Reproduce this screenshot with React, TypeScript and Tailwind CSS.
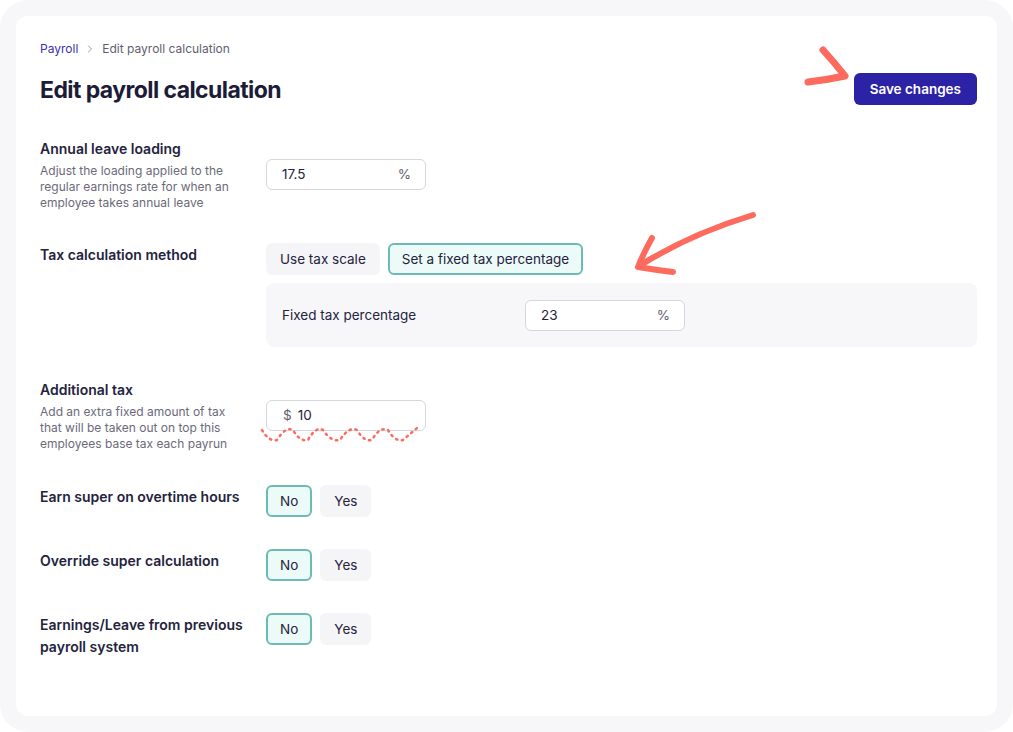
import { ChevronRight } from 'lucide-react';
import type { ReactNode } from 'react';

type RowProps = {
  label: ReactNode;
  description?: string;
  children: ReactNode;
};

function Row({ label, description, children }: RowProps) {
  return (
    <div className={`flex ${description ? 'items-center' : 'items-start'}`}>
      <div className={`w-[226px] shrink-0 pr-2 ${description ? '' : 'pt-px'}`}>
        <p className="text-sm font-semibold leading-[22px] text-[#24233d]">{label}</p>
        {description && (
          <p className="mt-[3px] pr-6 text-xs leading-4 text-[#6b6a7a]">{description}</p>
        )}
      </div>
      <div className="flex-1">{children}</div>
    </div>
  );
}

function Toggle({ options, value }: { options: string[]; value: string }) {
  return (
    <div className="flex gap-2">
      {options.map((option) => (
        <button
          key={option}
          className={`h-8 rounded-md text-[13.5px] text-[#24233d] ${
            option === value
              ? 'border-2 border-[#6dbab5] bg-[#ecfaf8] px-3'
              : 'bg-[#f5f5f8] px-[14px]'
          }`}
        >
          {option}
        </button>
      ))}
    </div>
  );
}

function SuffixInput({ value, suffix }: { value: string; suffix: string }) {
  return (
    <div className="flex h-[31px] w-40 items-center justify-between rounded-md border border-[#d6d6de] bg-white pl-[15px] pr-[14px] text-[13.5px]">
      <span className="text-[#24233d]">{value}</span>
      <span className="text-[#5f5e6e]">{suffix}</span>
    </div>
  );
}

export default function App() {
  return (
    <div
      className="h-[732px] w-[1013px] bg-white"
      style={{ fontFamily: 'Inter, "Noto Sans", sans-serif' }}
    >
      <div className="h-full rounded-[28px] bg-[#f7f7f9] p-4">
        <div className="relative h-[700px] rounded-xl bg-white pl-6 pr-5 pt-[25px]">
          {/* breadcrumb */}
          <nav className="flex items-center gap-[6px] text-xs leading-4">
            <span className="text-[#3b32b0]">Payroll</span>
            <ChevronRight size={12} strokeWidth={2} className="text-[#9a9aa6]" />
            <span className="text-[#5f5e6e]">Edit payroll calculation</span>
          </nav>

          <div className="mt-[17px] flex h-8 items-center justify-between">
            <h1 className="text-[23px] font-bold leading-8 tracking-tight text-[#1c1b38]">
              Edit payroll calculation
            </h1>
            <button className="mb-[2px] h-8 rounded-md bg-[#2b22a6] px-4 text-[13.5px] font-semibold text-white">
              Save changes
            </button>
          </div>

          <div className="mt-[32px] space-y-8">
            <Row
              label="Annual leave loading"
              description="Adjust the loading applied to the regular earnings rate for when an employee takes annual leave"
            >
              <SuffixInput value="17.5" suffix="%" />
            </Row>

            <Row label="Tax calculation method">
              <Toggle
                options={['Use tax scale', 'Set a fixed tax percentage']}
                value="Set a fixed tax percentage"
              />
              <div className="mt-2 flex h-16 items-center rounded-lg bg-[#f7f7f9] px-4">
                <span className="w-[243px] text-[13.5px] text-[#24233d]">Fixed tax percentage</span>
                <SuffixInput value="23" suffix="%" />
              </div>
            </Row>

            <Row
              label="Additional tax"
              description="Add an extra fixed amount of tax that will be taken out on top this employees base tax each payrun"
            >
              <div className="flex h-[31px] w-40 items-center gap-[6px] rounded-md border border-[#d6d6de] bg-white px-4 text-[13.5px]">
                <span className="text-[#5f5e6e]">$</span>
                <span className="text-[#24233d]">10</span>
              </div>
            </Row>

            <div className="space-y-8 pt-px">
              <Row label="Earn super on overtime hours">
                <Toggle options={['No', 'Yes']} value="No" />
              </Row>

              <Row label="Override super calculation">
                <Toggle options={['No', 'Yes']} value="No" />
              </Row>

              <Row
                label={
                  <>
                    Earnings/Leave from previous
                    <br />
                    payroll system
                  </>
                }
              >
                <Toggle options={['No', 'Yes']} value="No" />
              </Row>
            </div>
          </div>

          {/* hand drawn annotations */}
          <svg
            className="pointer-events-none absolute left-[-16px] top-[-16px]"
            width="1013"
            height="732"
            viewBox="0 0 1013 732"
            fill="none"
          >
            <path
              d="M823 50 Q834 62 845 76 Q826 80 808 82"
              stroke="#fd6b5f"
              strokeWidth="7"
              strokeLinecap="round"
              strokeLinejoin="round"
            />
            <path
              d="M753 215 Q690 234 639 266"
              stroke="#fd6b5f"
              strokeWidth="6"
              strokeLinecap="round"
            />
            <path
              d="M652 238 Q644 252 638 267 Q656 270 673 272"
              stroke="#fd6b5f"
              strokeWidth="6"
              strokeLinecap="round"
              strokeLinejoin="round"
            />
            <path
              d="M262 430 Q269 442 277 440 Q286 426 293 430 Q300 442 308 440 Q316 426 323 430 Q331 442 340 440 Q349 426 357 430 Q364 442 372 440 Q380 426 388 430 Q395 442 403 440 Q410 434 417 428"
              stroke="#fd6b5f"
              strokeWidth="2.5"
              strokeLinecap="round"
              strokeDasharray="1.5 4.5"
            />
          </svg>
        </div>
      </div>
    </div>
  );
}
